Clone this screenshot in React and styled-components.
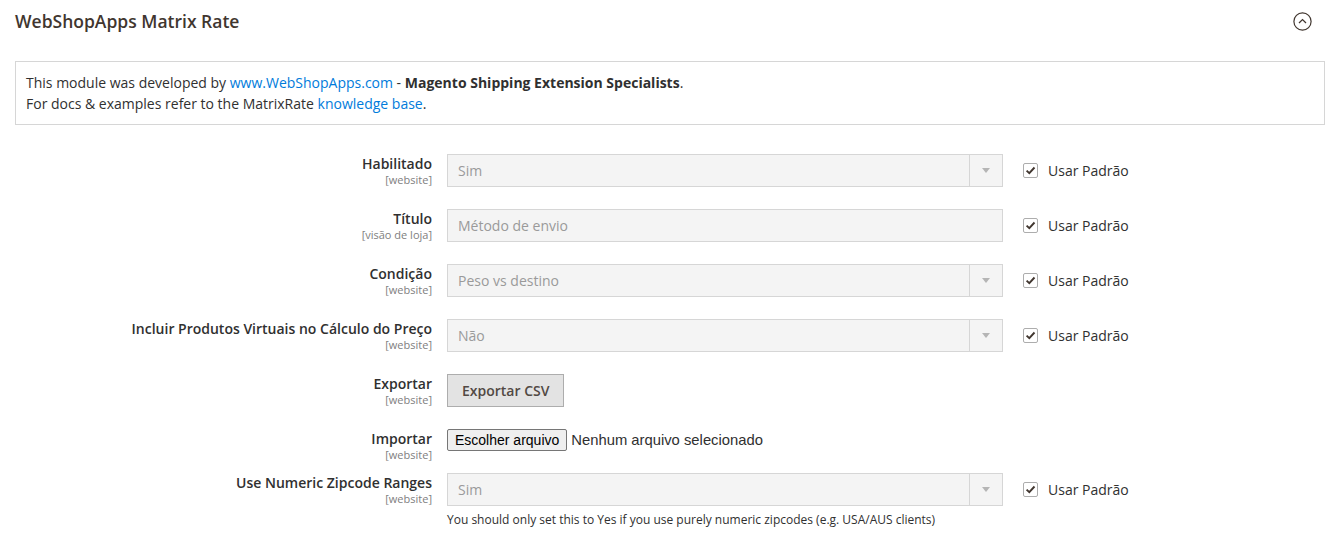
import React from "react";
import styled, { createGlobalStyle } from "styled-components";

const Global = createGlobalStyle`
  html, body { margin: 0; padding: 0; background: #fff; }
  body { font-family: "Open Sans", "Liberation Sans", sans-serif; color: #303030; }
  * { box-sizing: border-box; }
`;

const Page = styled.div`
  width: 1337px;
  padding: 0 12px 0 15px;
`;

const Header = styled.div`
  display: flex;
  align-items: center;
  justify-content: space-between;
  height: 42px;
  margin-bottom: 19px;
`;

const Title = styled.h2`
  margin: 0;
  font-size: 17.5px;
  font-weight: 600;
  color: #41362f;
`;

const Toggle = styled.button`
  width: 19px;
  height: 19px;
  padding: 0;
  margin-right: 13px;
  border: none;
  background: none;
  display: flex;
  align-items: center;
  justify-content: center;
`;

const InfoBox = styled.div`
  border: 1px solid #d6d6d6;
  padding: 10px;
  font-size: 14px;
  line-height: 21px;
  color: #303030;
  margin-bottom: 29px;
`;

const Link = styled.a`
  color: #007bdb;
  text-decoration: none;
`;

const Strong = styled.strong`
  font-weight: 700;
`;

const Form = styled.div`
  display: flex;
  flex-direction: column;
`;

const Row = styled.div`
  display: grid;
  grid-template-columns: 417px 556px auto;
  column-gap: 15px;
  margin-bottom: ${(p) => p.$gap}px;
`;

const LabelBlock = styled.div`
  display: flex;
  flex-direction: column;
  align-items: flex-end;
  text-align: right;
`;

const Label = styled.span`
  font-size: 14px;
  font-weight: 600;
  line-height: 19px;
  color: #303030;
`;

const Scope = styled.span`
  font-size: 11px;
  line-height: 13px;
  color: #808080;
`;

const Control = styled.div`
  display: flex;
  flex-direction: column;
`;

const SelectBox = styled.div`
  height: 33px;
  display: flex;
  align-items: stretch;
  border: 1px solid #d6d6d6;
  background: #f4f4f4;
  font-size: 14px;
  color: #9a9a9a;
`;

const SelectValue = styled.span`
  flex: 1;
  display: flex;
  align-items: center;
  padding-left: 10px;
`;

const SelectArrow = styled.span`
  width: 33px;
  border-left: 1px solid #d6d6d6;
  display: flex;
  align-items: center;
  justify-content: center;
  &::after {
    content: "";
    border-left: 4px solid transparent;
    border-right: 4px solid transparent;
    border-top: 5px solid #b5b5b5;
  }
`;

const TextInput = styled.div`
  height: 33px;
  border: 1px solid #d6d6d6;
  background: #f4f4f4;
  font-size: 14px;
  color: #9a9a9a;
  display: flex;
  align-items: center;
  padding-left: 10px;
`;

const Button = styled.button`
  align-self: flex-start;
  height: 33px;
  padding: 0 14px;
  border: 1px solid #adadad;
  background: #e3e3e3;
  color: #514943;
  font-family: "Open Sans", "Liberation Sans", sans-serif;
  font-size: 14px;
  font-weight: 600;
`;

const FileRow = styled.div`
  display: flex;
  align-items: center;
  height: 22px;
  gap: 4px;
`;

const FileButton = styled.button`
  height: 22px;
  padding: 0 7px;
  border: 1px solid #767676;
  border-radius: 2px;
  background: #efefef;
  color: #000;
  font-family: "Liberation Sans", Arial, sans-serif;
  font-size: 14px;
`;

const FileText = styled.span`
  font-family: "Liberation Sans", Arial, sans-serif;
  font-size: 14.8px;
  color: #303030;
`;

const Note = styled.div`
  margin-top: 6px;
  font-size: 12px;
  line-height: 16px;
  color: #303030;
`;

const Default = styled.label`
  display: flex;
  align-items: center;
  height: 33px;
  padding-left: 5px;
  gap: 10px;
  font-size: 14px;
  color: #303030;
`;

const Box = styled.span`
  width: 15px;
  height: 15px;
  border: 1px solid #adadad;
  border-radius: 2px;
  background: #fff;
  display: flex;
  align-items: center;
  justify-content: center;
`;

const Check = () => (
  <Box>
    <svg width="11" height="11" viewBox="0 0 11 11">
      <path d="M1.6 5.6 L4.3 8.2 L9.5 2.5" fill="none" stroke="#41362f" strokeWidth="1.9" />
    </svg>
  </Box>
);

const UseDefault = () => (
  <Default>
    <Check />
    Usar Padrão
  </Default>
);

const Select = ({ value }) => (
  <SelectBox>
    <SelectValue>{value}</SelectValue>
    <SelectArrow />
  </SelectBox>
);

const Field = ({ label, scope, children, def = true, gap = 22 }) => (
  <Row $gap={gap}>
    <LabelBlock>
      <Label>{label}</Label>
      <Scope>{scope}</Scope>
    </LabelBlock>
    <Control>{children}</Control>
    {def ? <UseDefault /> : <span />}
  </Row>
);

export default function App() {
  return (
    <>
      <Global />
      <Page>
        <Header>
          <Title>WebShopApps Matrix Rate</Title>
          <Toggle aria-label="Recolher">
            <svg width="19" height="19" viewBox="0 0 19 19">
              <circle cx="9.5" cy="9.5" r="8.6" fill="none" stroke="#41362f" strokeWidth="1.2" />
              <path d="M6 11 L9.5 7.6 L13 11" fill="none" stroke="#41362f" strokeWidth="1.3" />
            </svg>
          </Toggle>
        </Header>
        <InfoBox>
          This module was developed by <Link href="#">www.WebShopApps.com</Link> -{" "}
          <Strong>Magento Shipping Extension Specialists</Strong>.
          <br />
          For docs &amp; examples refer to the MatrixRate <Link href="#">knowledge base</Link>.
        </InfoBox>
        <Form>
          <Field label="Habilitado" scope="[website]">
            <Select value="Sim" />
          </Field>
          <Field label="Título" scope="[visão de loja]">
            <TextInput>Método de envio</TextInput>
          </Field>
          <Field label="Condição" scope="[website]">
            <Select value="Peso vs destino" />
          </Field>
          <Field label="Incluir Produtos Virtuais no Cálculo do Preço" scope="[website]">
            <Select value="Não" />
          </Field>
          <Field label="Exportar" scope="[website]" def={false}>
            <Button>Exportar CSV</Button>
          </Field>
          <Field label="Importar" scope="[website]" def={false} gap={12}>
            <FileRow>
              <FileButton>Escolher arquivo</FileButton>
              <FileText>Nenhum arquivo selecionado</FileText>
            </FileRow>
          </Field>
          <Field label="Use Numeric Zipcode Ranges" scope="[website]" gap={0}>
            <Select value="Sim" />
            <Note>You should only set this to Yes if you use purely numeric zipcodes (e.g. USA/AUS clients)</Note>
          </Field>
        </Form>
      </Page>
    </>
  );
}
